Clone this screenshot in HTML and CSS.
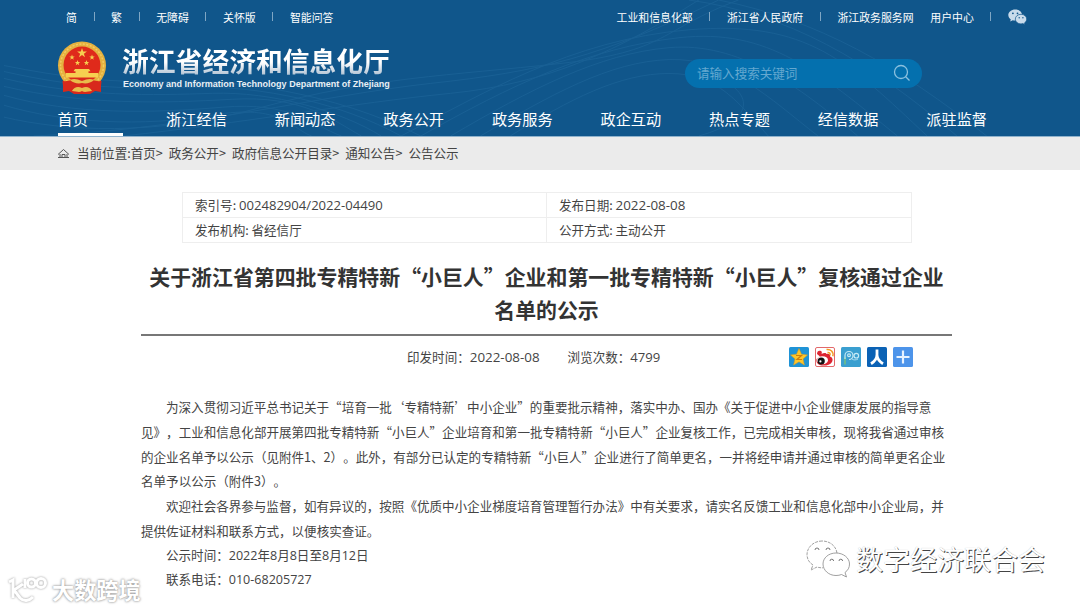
FILE: index.html
```html
<!DOCTYPE html>
<html lang="zh-CN">
<head>
  <meta charset="UTF-8">
  <title>浙江省经济和信息化厅</title>
  <link rel="stylesheet" href="styles.css">
</head>
<body>
  <header class="header">
    <svg class="waves" viewBox="0 0 1080 137" fill="none" stroke="#3b86b8">
      <path d="M0 66C60 78 110 84 170 82S330 92 420 137"/>
      <path d="M0 72C70 88 120 90 190 88S340 104 400 137"/>
      <path d="M0 79C80 98 150 96 210 94S340 112 380 137"/>
      <path d="M0 87C80 106 160 104 230 100S330 120 360 137"/>
      <path d="M0 96C70 116 150 114 220 108S310 126 340 137"/>
      <path d="M0 106C60 124 140 128 210 116S290 130 310 137"/>
      <path d="M0 118C60 132 150 138 260 108S450 76 560 64S660 30 740 0"/>
      <path d="M30 137C190 130 320 96 430 84S600 58 720 0"/>
      <path d="M120 137C240 124 350 104 450 94S620 50 700 0"/>
      <path d="M400 137C480 96 570 40 690 30S850 62 930 137"/>
      <path d="M420 137C510 86 590 48 680 38S820 72 900 137"/>
      <path d="M450 137C530 90 600 54 670 48S800 86 860 137"/>
      <path d="M480 137C550 96 610 62 670 60S770 98 820 137"/>
      <path d="M510 137C570 100 620 74 670 74S740 104 770 137"/>
      <path d="M690 0C790 14 870 60 960 137"/>
      <path d="M720 0C820 20 900 66 990 137"/>
      <path d="M700 137C760 120 760 90 700 70"/>
    </svg>

    <div class="topbar">
      <div class="top-links">
        <a>简</a><i></i><a>繁</a><i></i><a>无障碍</a><i></i><a>关怀版</a><i></i><a>智能问答</a>
      </div>
      <div class="top-links">
        <a>工业和信息化部</a><i></i><a>浙江省人民政府</a><i></i><a>浙江政务服务网</a><a>用户中心</a><i></i>
        <svg class="wechat" viewBox="0 0 19 16">
          <path fill="#c9dbeb" d="M7.200.5C3.300.5.3 3 .3 6.100c0 1.800 1 3.300 2.500 4.300L2.200 12.600l2.500-1.300c.8.2 1.600.3 2.500.3 3.900 0 6.900-2.500 6.900-5.500S11.100.5 7.200.5z"/>
          <path fill="#c9dbeb" stroke="#10568b" stroke-width=".7" d="M13 5.300c-3.200 0-5.700 2.100-5.700 4.800s2.500 4.800 5.700 4.800c.7 0 1.300-.1 1.900-.3l2.100 1.100-.5-1.800c1.400-.9 2.200-2.300 2.200-3.800 0-2.700-2.500-4.800-5.700-4.800z"/>
          <g fill="#10568b"><circle cx="4.900" cy="4.300" r=".9"/><circle cx="9.500" cy="4.300" r=".9"/><circle cx="11.200" cy="8.700" r=".7"/><circle cx="14.900" cy="8.700" r=".7"/></g>
        </svg>
      </div>
    </div>

    <div class="brand-row">
      <div class="brand">
        <svg class="emblem" viewBox="0 0 50 54">
          <path fill="#d8291c" d="M6 36v15l6-1 5 3h16l5-3 6 1V36z"/>
          <circle cx="25" cy="24.500" r="24" fill="#e5b13f"/>
          <circle cx="25" cy="24.500" r="21.500" fill="none" stroke="#f2cb63" stroke-width="1.500" stroke-dasharray="2 1.500"/>
          <circle cx="25" cy="24" r="18.500" fill="#df2a1b"/>
          <g fill="#f6cf50">
            <path d="M25 7l1.200 3.500h3.700l-3 2.200 1.100 3.500-3-2.100-3 2.100 1.100-3.500-3-2.200h3.700z"/>
            <path id="star" d="M15 13.500l.7 2h2l-1.600 1.200.6 2-1.700-1.200-1.700 1.200.6-2-1.600-1.200h2z"/>
            <use href="#star" x="20"/>
            <use href="#star" x="5.500" y="5.500"/>
            <use href="#star" x="14.500" y="5.500"/>
            <path d="M18 28h14l1.500 2.200h-2V32H41v4.500H9V32h9.500v-1.800h-2z"/>
          </g>
          <path fill="#d8291c" d="M5.500 40c7 1 9-2 13-3h13c4 1 6 4 13 3l-1 10c-6-2-12-2-18.500-2S12 48 6.500 50z"/>
          <path fill="#e9bd4b" d="M13 39c4-2 7-1 12 1 5-2 8-3 12-1-3 3-8 4-12 3-4 1-9 0-12-3zM15 50c2-4 6-5 10-3 4-2 8-1 10 3-4 0-7 2-10 0-3 2-6 0-10 0z"/>
        </svg>
        <div class="brand-text">
          <div class="brand-cn">浙江省经济和信息化厅</div>
          <div class="brand-en">Economy and Information Technology Department of Zhejiang</div>
        </div>
      </div>
      <div class="search">
        <span>请输入搜索关键词</span>
        <svg class="search-icon" viewBox="0 0 18 18" fill="none" stroke="#8ac0df" stroke-width="1.300">
          <circle cx="8" cy="8" r="6.500"/><path d="M12.700 12.700L16.500 16.500"/>
        </svg>
      </div>
    </div>

    <nav class="nav">
      <a class="active">首页</a>
      <a>浙江经信</a>
      <a>新闻动态</a>
      <a>政务公开</a>
      <a>政务服务</a>
      <a>政企互动</a>
      <a>热点专题</a>
      <a>经信数据</a>
      <a>派驻监督</a>
    </nav>
  </header>

  <div class="crumbs">
    <svg class="home" viewBox="0 0 12 11" fill="none" stroke="#555">
      <path d="M.5 6.500L6 1.500l5.500 5M2.500 6v3M9.500 6v3M.5 9.500h11M4.500 9V6.500h3V9"/>
    </svg>
    <span>当前位置:首页&gt;</span><span>政务公开&gt;</span><span>政府信息公开目录&gt;</span><span>通知公告&gt;</span><span>公告公示</span>
  </div>

  <main class="main">
    <div class="info">
      <div>索引号: <b>002482904/2022-04490</b></div>
      <div>发布日期: <b class="day">2022-08-08</b></div>
      <div>发布机构: 省经信厅</div>
      <div>公开方式: 主动公开</div>
    </div>

    <h1 class="title">关于浙江省第四批专精特新“小巨人”企业和第一批专精特新“小巨人”复核通过企业名单的公示</h1>

    <div class="meta">
      <span class="date">印发时间：<b class="day">2022-08-08</b></span>
      <span class="views">浏览次数：<b>4799</b></span>
      <div class="share">
        <svg viewBox="0 0 20 20">
          <rect width="20" height="20" rx="1.500" fill="#1f93d6"/>
          <path fill="#fdc62c" stroke="#e79a12" stroke-width=".5" d="M10 1.500l2.500 5.800 6 .6-4.500 4 1.400 6.100-5.400-3.200L4.600 18 6 11.900l-4.500-4 6-.6z"/>
          <path fill="none" stroke="#d07d0c" stroke-width="1.200" d="M7 8.500h5.500L8 12.500h5"/>
        </svg>
        <svg viewBox="0 0 20 20">
          <rect x=".5" y=".5" width="19" height="19" rx="1.500" fill="#fff" stroke="#e2696b"/>
          <path fill="#dc2431" d="M2 7c0-3 2-4 4-3 1 .4 1 2 .5 3 2-1.500 5-1.500 5 0 3-.5 4 .5 3.500 2.500 3 1 3 3.500 2 5.500-2 3-6 4-10 3.500C3 18 1 16 1.500 12L5 9.500z"/>
          <ellipse cx="7.500" cy="13.200" rx="5.500" ry="4" fill="#fff"/>
          <circle cx="6.200" cy="14" r="3.600" fill="#111"/><circle cx="5.400" cy="14.400" r="1.100" fill="#fff"/>
          <path fill="none" stroke="#f39a1f" stroke-width="1.500" d="M11.500 2.500c4-.7 7.500 2.500 6.300 6.800M12.500 5.500c1.800-.3 3 1 2.500 2.700"/>
        </svg>
        <svg viewBox="0 0 20 20">
          <rect width="20" height="20" rx="1.500" fill="#3a9fd0"/>
          <path fill="none" stroke="#7cc576" stroke-width="1.300" d="M4 10v7.500"/>
          <g fill="none" stroke="#c5e9f5" stroke-width="1.200"><path d="M4 12V8.500a4 4 0 1 1 4 4"/><circle cx="8" cy="8.300" r="1.400"/><circle cx="15.300" cy="8.700" r="2.300"/><path d="M11 12c1.500 1.200 4 1.200 6 0" stroke-width=".8"/></g>
        </svg>
        <svg viewBox="0 0 20 20">
          <rect width="20" height="20" rx="1.500" fill="#0b62b5"/>
          <path fill="none" stroke="#fff" stroke-width="2.800" d="M10 2.500v5c0 4-2.500 7-6 9.200M10 8c.3 4 2.800 6.800 6 8.700"/>
        </svg>
        <svg viewBox="0 0 20 20">
          <rect width="20" height="20" rx="1.500" fill="#4d94ea"/>
          <path stroke="#e8f2ff" stroke-width="2.200" d="M10 3.500v13M3.500 10h13"/>
        </svg>
      </div>
    </div>

    <article class="content">
      <p>为深入贯彻习近平总书记关于“培育一批‘专精特新’中小企业”的重要批示精神，落实中办、国办《关于促进中小企业健康发展的指导意见》，工业和信息化部开展第四批专精特新“小巨人”企业培育和第一批专精特新“小巨人”企业复核工作，已完成相关审核，现将我省通过审核的企业名单予以公示（见附件1、2）。此外，有部分已认定的专精特新“小巨人”企业进行了简单更名，一并将经申请并通过审核的简单更名企业名单予以公示（附件3）。</p>
      <p>欢迎社会各界参与监督，如有异议的，按照《优质中小企业梯度培育管理暂行办法》中有关要求，请实名反馈工业和信息化部中小企业局，并提供佐证材料和联系方式，以便核实查证。</p>
      <p class="latin">公示时间：2022年8月8日至8月12日</p>
      <p class="latin">联系电话：010-68205727</p>
    </article>
  </main>

  <div class="mark mark-left">
    <svg viewBox="0 0 40 28" fill="none" stroke="#fff" stroke-width="3">
      <path d="M1 7l4-2v18M15 9l-9 6 6 8c4 4 9 3 13-1M17 4v9"/>
      <circle cx="23.500" cy="8" r="4"/><circle cx="33" cy="8" r="4.500"/>
    </svg>
    <span>大数跨境</span>
  </div>

  <div class="mark mark-right">
    <svg viewBox="0 0 46 40" fill="#fff" stroke="#888" stroke-width=".8">
      <path stroke-dasharray="3 1" d="M17 2C9 2 2 8 2 15.500c0 4.500 2 8 6 10.500l-2 5 6-3c2 .7 4 .9 6 .8M32 14C31 7 25 2 17 2"/>
      <path d="M31 14c-7.500 0-13 5-13 11s5.500 11.500 13 11.500c2 0 4-.3 5.500-1l5 2.500-1.500-4.500c3-2.200 4.500-5 4.500-8.500 0-6-6-11-13.500-11z"/>
      <g fill="none" stroke="#555"><path d="M10 11a2 2 0 0 1 4 0M21 11a2 2 0 0 1 4 0M25 22a1.800 1.800 0 0 1 3.600 0M34 22a1.800 1.800 0 0 1 3.600 0"/></g>
    </svg>
    <span>数字经济联合会</span>
  </div>
</body>
</html>
```

FILE: styles.css
```css
* {
  box-sizing: border-box;
}
body {
  margin: 0;
  height: 609px;
  overflow: hidden;
  position: relative;
  background: #fff;
  color: #444;
  font-family: "Noto Sans CJK SC", sans-serif;
  font-size: 12.56px;
  text-spacing-trim: space-all;
}
b {
  font-family: "Open Sans", sans-serif;
  font-size: 13.1px;
  font-weight: normal;
  line-height: 1;
}
.day {
  font-size: 13.4px;
}
svg {
  display: block;
  flex: none;
}

/* header */
.header {
  position: relative;
  height: 137px;
  background: #10568b;
  border-bottom: 1px solid #8fb2cc;
  color: #fff;
}
.waves {
  position: absolute;
  left: 0;
  top: 0;
  width: 1080px;
  height: 136px;
  opacity: .2;
}
.topbar {
  position: relative;
  display: flex;
  justify-content: space-between;
  height: 33px;
  padding: 0 53px 0 66px;
  font-size: 10.9px;
}
.top-links {
  display: flex;
  align-items: center;
  gap: 16.6px;
}
.top-links a {
  white-space: nowrap;
}
.top-links i {
  width: 1px;
  height: 9px;
  background: #7fa6c4;
}
.wechat {
  width: 19px;
  height: 16px;
}
.brand-row {
  position: relative;
  display: flex;
  justify-content: space-between;
  height: 69px;
  padding: 8px 158px 0 57px;
}
.brand {
  display: flex;
}
.emblem {
  width: 50px;
  height: 54px;
}
.brand-text {
  padding: 3px 0 0 15px;
}
.brand-cn {
  font-size: 26.8px;
  font-weight: bold;
  line-height: 33px;
  white-space: nowrap;
  background: linear-gradient(#fff 55%, #b9c9d8 90%);
  -webkit-background-clip: text;
  background-clip: text;
  color: transparent;
}
.brand-en {
  padding-left: 1px;
  font-family: "Liberation Sans", sans-serif;
  font-size: 9.03px;
  font-weight: bold;
  line-height: 14px;
  white-space: nowrap;
  color: #e8eff5;
}
.search {
  display: flex;
  justify-content: space-between;
  align-items: center;
  width: 237px;
  height: 29px;
  margin-top: 18px;
  padding: 0 11px 2px 12px;
  border-radius: 15px;
  background: #0470ae;
  color: #65a8d0;
}
.search-icon {
  width: 18px;
  height: 18px;
}
.nav {
  position: relative;
  display: flex;
  height: 34px;
  padding-left: 57.5px;
  font-size: 15.2px;
}
.nav a {
  width: 65.5px;
  height: 34px;
  margin-right: 43.1px;
  line-height: 32px;
  white-space: nowrap;
}
.nav .active {
  border-bottom: 3px solid #fff;
}

/* breadcrumbs */
.crumbs {
  display: flex;
  align-items: center;
  gap: 6px;
  height: 33px;
  padding: 0 0 2px 57px;
  background: #ebebeb;
}
.home {
  width: 13px;
  height: 11px;
  margin: 2px 1px 0 0;
}

.main {
  width: 811px;
  margin: 0 0 0 141px;
  padding-top: 22px;
}
.info {
  display: grid;
  grid-template-columns: 364px 1fr;
  width: 730px;
  margin-left: 41px;
  border-top: 1px solid #eee;
  border-left: 1px solid #eee;
}
.info div {
  height: 25px;
  padding-left: 12px;
  line-height: 24px;
  border-right: 1px solid #eee;
  border-bottom: 1px solid #eee;
}
.title {
  margin: 17px 0 0;
  padding-bottom: 8px;
  border-bottom: 2px solid #777;
  color: #333;
  font-size: 20.92px;
  line-height: 33px;
  text-align: center;
}
.meta {
  display: flex;
  align-items: center;
  height: 42px;
  padding: 0 39px 0 266px;
}
.date,
.views {
  padding-bottom: 2px;
}
.views {
  margin-left: 28px;
}
.share {
  display: flex;
  gap: 6px;
  margin-left: auto;
}
.share svg {
  width: 20px;
  height: 20px;
}
.content {
  margin-top: 17px;
  line-height: 24.75px;
}
.content p {
  margin: 0;
  text-indent: 25px;
}
.content .latin {
  font-family: "Open Sans", "Noto Sans CJK SC", sans-serif;
}

/* watermarks */
.mark {
  position: absolute;
  display: flex;
  align-items: center;
  color: #fff;
  white-space: nowrap;
}
.mark-left {
  left: 8px;
  top: 573px;
  gap: 4px;
  font-size: 22.2px;
  font-weight: bold;
  line-height: 32px;
  text-shadow: 0 0 2px #999, 0 0 3px #aaa;
}
.mark-left svg {
  width: 40px;
  height: 28px;
  filter: drop-shadow(0 0 1px #999);
}
.mark-right {
  left: 805px;
  top: 539px;
  gap: 5px;
  font-size: 27px;
  line-height: 40px;
  text-shadow: 1px 1px 0 #444, 0 0 1px #bbb;
}
.mark-right svg {
  width: 46px;
  height: 40px;
}
```
